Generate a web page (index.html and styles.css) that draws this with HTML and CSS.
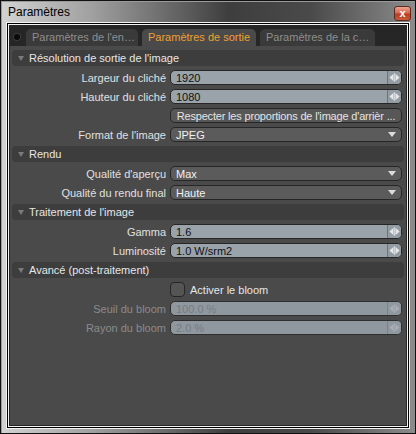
FILE: index.html
```html
<!DOCTYPE html>
<html lang="fr">
<head>
<meta charset="utf-8">
<title>Paramètres</title>
<link rel="stylesheet" href="styles.css">
</head>
<body>
<div class="window">
  <div class="titlebar">
    <span class="title">Paramètres</span>
    <span class="close">x</span>
  </div>
  <div class="client-outer">
    <div class="client-mid">
      <div class="client">
        <div class="tabstrip">
          <span class="dot"></span>
          <span class="tab">Paramètres de l'en…</span>
          <span class="tab active">Paramètres de sortie</span>
          <span class="tab">Paramètres de la c…</span>
        </div>
        <div class="sections">
          <div class="header"><span class="tri"></span>Résolution de sortie de l'image</div>
          <div class="row"><span class="label">Largeur du cliché</span><span class="field num"><span class="val">1920</span><span class="spin"><svg width="14" height="13" viewBox="0 0 14 13"><path d="M1.5 6.5 L6 2.5 V10.5 Z M12.5 6.5 L8 2.5 V10.5 Z" fill="#e4e6e8"/><rect x="6.6" y="1.5" width="0.8" height="10" fill="#e4e6e8"/></svg></span></span></div>
          <div class="row"><span class="label">Hauteur du cliché</span><span class="field num"><span class="val">1080</span><span class="spin"><svg width="14" height="13" viewBox="0 0 14 13"><path d="M1.5 6.5 L6 2.5 V10.5 Z M12.5 6.5 L8 2.5 V10.5 Z" fill="#e4e6e8"/><rect x="6.6" y="1.5" width="0.8" height="10" fill="#e4e6e8"/></svg></span></span></div>
          <div class="row"><span class="label"></span><span class="field button">Respecter les proportions de l'image d'arrièr ...</span></div>
          <div class="row"><span class="label">Format de l'image</span><span class="field select"><span class="val">JPEG</span><span class="arrow"></span></span></div>

          <div class="header"><span class="tri"></span>Rendu</div>
          <div class="row"><span class="label">Qualité d'aperçu</span><span class="field select"><span class="val">Max</span><span class="arrow"></span></span></div>
          <div class="row"><span class="label">Qualité du rendu final</span><span class="field select"><span class="val">Haute</span><span class="arrow"></span></span></div>

          <div class="header"><span class="tri"></span>Traitement de l'image</div>
          <div class="row"><span class="label">Gamma</span><span class="field num"><span class="val">1.6</span><span class="spin"><svg width="14" height="13" viewBox="0 0 14 13"><path d="M1.5 6.5 L6 2.5 V10.5 Z M12.5 6.5 L8 2.5 V10.5 Z" fill="#e4e6e8"/><rect x="6.6" y="1.5" width="0.8" height="10" fill="#e4e6e8"/></svg></span></span></div>
          <div class="row"><span class="label">Luminosité</span><span class="field num"><span class="val">1.0 W/srm2</span><span class="spin"><svg width="14" height="13" viewBox="0 0 14 13"><path d="M1.5 6.5 L6 2.5 V10.5 Z M12.5 6.5 L8 2.5 V10.5 Z" fill="#e4e6e8"/><rect x="6.6" y="1.5" width="0.8" height="10" fill="#e4e6e8"/></svg></span></span></div>

          <div class="header"><span class="tri"></span>Avancé (post-traitement)</div>
          <div class="row"><span class="label"></span><span class="check"></span><span class="checklabel">Activer le bloom</span></div>
          <div class="row disabled"><span class="label">Seuil du bloom</span><span class="field num"><span class="val">100.0 %</span><span class="spin"><svg width="14" height="13" viewBox="0 0 14 13"><path d="M1.5 6.5 L6 2.5 V10.5 Z M12.5 6.5 L8 2.5 V10.5 Z" fill="#a8aeb4"/><rect x="6.6" y="1.5" width="0.8" height="10" fill="#a8aeb4"/></svg></span></span></div>
          <div class="row disabled"><span class="label">Rayon du bloom</span><span class="field num"><span class="val">2.0 %</span><span class="spin"><svg width="14" height="13" viewBox="0 0 14 13"><path d="M1.5 6.5 L6 2.5 V10.5 Z M12.5 6.5 L8 2.5 V10.5 Z" fill="#a8aeb4"/><rect x="6.6" y="1.5" width="0.8" height="10" fill="#a8aeb4"/></svg></span></span></div>
        </div>
      </div>
    </div>
  </div>
</div>
</body>
</html>
```

FILE: styles.css
```css
* { box-sizing: border-box; }
html, body { margin: 0; padding: 0; background: #2a2a2a; }
body { font-family: "Liberation Sans", Arial, sans-serif; font-size: 11px; }

.window {
  width: 416px;
  height: 434px;
  border: 1px solid #111;
  background: linear-gradient(90deg, #d2d2d2 0%, #a0a0a0 22%, #3e3e3e 55%, #4a4a4a 75%, #8c8c8c 100%);
  display: flex;
  flex-direction: column;
  padding: 0 5px 4px 5px;
  box-shadow: inset 1px 1px 0 #9a9a9a;
}

.titlebar {
  height: 21px;
  display: flex;
  align-items: center;
  justify-content: space-between;
  padding: 0 0 0 2px;
}
.title { color: #000; font-size: 12px; }
.close {
  width: 17px;
  height: 15px;
  margin-right: -1px;
  margin-top: 4px;
  border: 1px solid #5a2a20;
  border-radius: 3px;
  background: linear-gradient(180deg, #eba592 0%, #d8684e 45%, #b83c22 55%, #c85a3a 100%);
  color: #fff;
  font-weight: bold;
  font-size: 11px;
  line-height: 12px;
  text-align: center;
}

.client-outer {
  flex: 1;
  border: 1px solid #f2f2f2;
  background: #000;
  padding: 1px;
  display: flex;
}
.client-mid {
  flex: 1;
  border: 1px solid #f2f2f2;
  display: flex;
}
.client {
  flex: 1;
  background: #4a4a4a;
  border: 1px solid #262626;
  border-top: none;
}

.tabstrip {
  height: 21px;
  background: #262626;
  display: flex;
  align-items: flex-end;
  padding-left: 4px;
  gap: 4px;
}
.dot {
  width: 6px;
  height: 6px;
  border-radius: 50%;
  background: #0a0a0a;
  box-shadow: 0 0 0 1px #3a3a3a;
  align-self: center;
  margin-right: 2px;
  margin-top: 2px;
}
.tab {
  height: 17px;
  padding: 0 6px;
  background: #3a3a3a;
  color: #8e8e8e;
  border-radius: 5px 5px 0 0;
  line-height: 17px;
  white-space: nowrap;
}
.tab.active { background: #4a4a4a; color: #f0a030; }
.tab:nth-of-type(1) { width: 109px; margin-right: 5px; }
.tab:nth-of-type(2) { width: 112px; }
.tab:nth-of-type(3) { width: 114px; }

.sections {
  padding: 4px 0 0 0;
  display: flex;
  flex-direction: column;
  gap: 4px;
}

.header {
  height: 16px;
  margin: 0 2px 0 2px;
  background: #3d3d3d;
  border-radius: 4px;
  color: #e6e6e6;
  display: flex;
  align-items: center;
  padding-left: 6px;
}
.tri {
  width: 0;
  height: 0;
  border-left: 3px solid transparent;
  border-right: 3px solid transparent;
  border-top: 5px solid #7a7a7a;
  margin-right: 5px;
}

.row {
  height: 15px;
  display: flex;
  align-items: center;
}
.label {
  width: 156px;
  text-align: right;
  color: #e0e0e0;
  margin-right: 4px;
  white-space: nowrap;
}
.field {
  width: 232px;
  height: 15px;
  border: 1px solid #262626;
  border-radius: 5px;
  display: flex;
  align-items: center;
  overflow: hidden;
}
.field .val { flex: 1; padding-left: 5px; white-space: nowrap; }
.num { background: #9aa2aa; color: #111; }
.spin {
  width: 14px;
  height: 13px;
  border-left: 1px solid #6c747c;
  background: #939ba3;
  display: flex;
}
.select { background: #5b5b5b; color: #f2f2f2; }
.arrow {
  width: 0;
  height: 0;
  border-left: 4px solid transparent;
  border-right: 4px solid transparent;
  border-top: 5px solid #dcdcdc;
  margin-right: 5px;
}
.button {
  background: #575757;
  color: #e4e4e4;
  justify-content: center;
  white-space: nowrap;
  letter-spacing: -0.18px;
}

.check {
  width: 15px;
  height: 15px;
  border: 1px solid #262626;
  border-radius: 4px;
  background: #555;
  margin-right: 5px;
}
.checklabel { color: #e6e6e6; }

.disabled .label { color: #8a8a8a; }
.disabled .num { background: #8f979f; color: #757d85; border-color: #2e2e2e; }
.disabled .spin { background: #8f979f; border-left-color: #79818a; }
```
